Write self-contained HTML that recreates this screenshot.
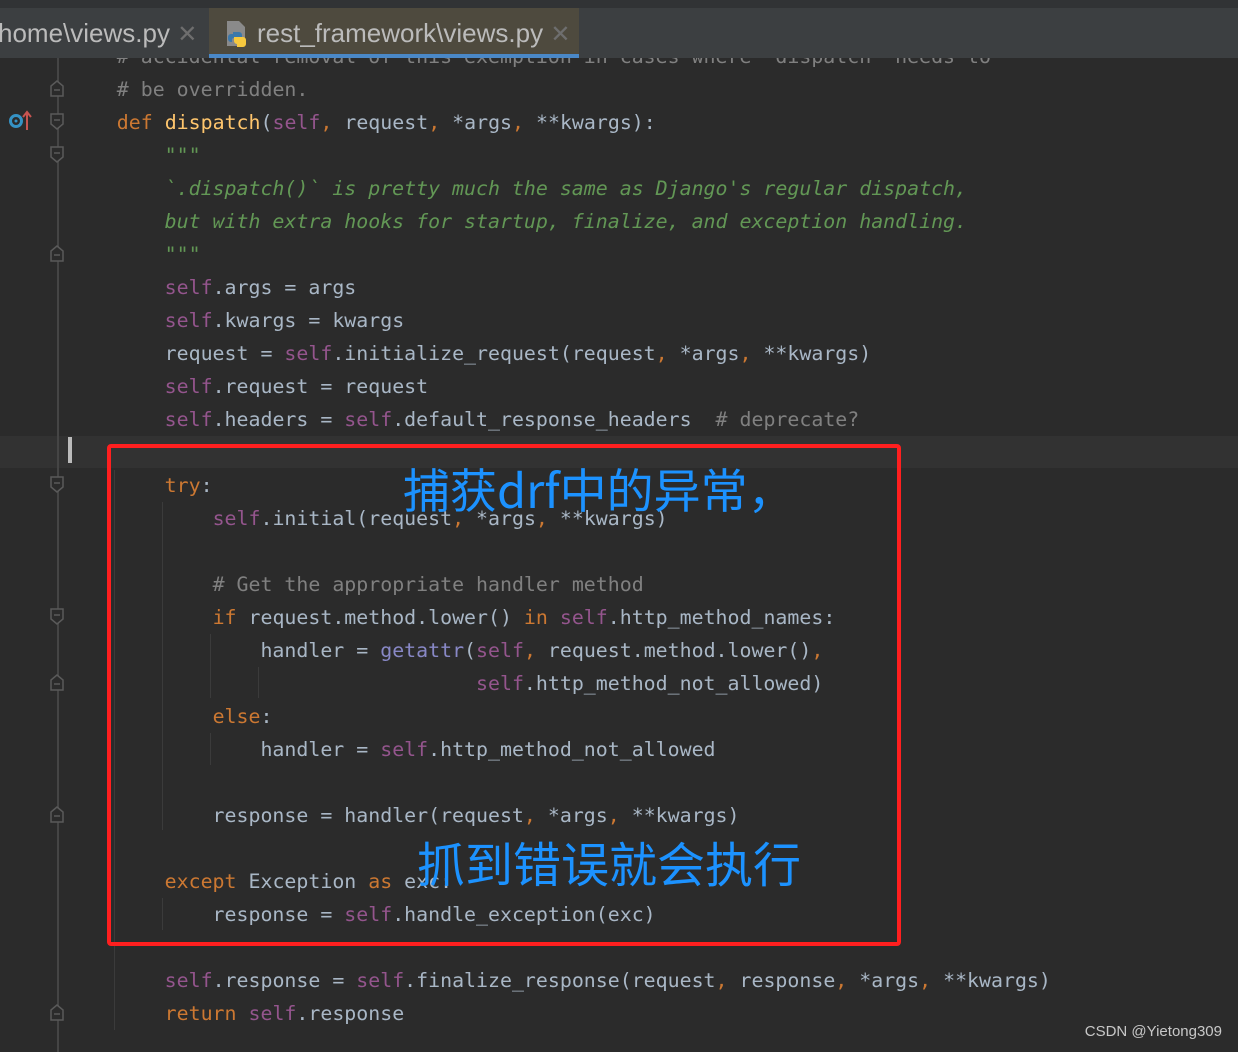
<!DOCTYPE html>
<html><head><meta charset="utf-8"><style>
html,body{margin:0;padding:0;}
body{width:1238px;height:1052px;background:#2b2b2b;position:relative;overflow:hidden;font-family:"DejaVu Sans Mono","Liberation Mono",monospace;}
.tabs{position:absolute;left:0;top:0;width:1238px;height:58px;background:#3c3f41;border-top:8px solid #313335;box-sizing:border-box;}
.tab{position:absolute;top:0;height:50px;font-family:"Liberation Sans",sans-serif;font-size:26px;color:#bbbbbb;line-height:50px;white-space:nowrap;}
.t1{left:-2px;}
.t2{left:209px;width:370px;background:#4e4a3e;border-bottom:4px solid #4a88c7;box-sizing:border-box;height:50px;}
.x{color:#6e6e6e;font-size:24px;}
.code{position:absolute;left:-3px;top:40px;width:1250px;}
.ln{height:33px;line-height:33px;font-size:19.9px;color:#a9b7c6;white-space:pre;position:relative;}
.k{color:#cc7832}.s{color:#94558d}.c{color:#808080}.d{color:#629755;font-style:italic}.f{color:#ffc66d}.b{color:#8888c6}
.cur{position:absolute;left:0;top:436px;width:1238px;height:32px;background:#323232;}
.gl{position:absolute;left:57px;top:58px;width:2px;height:994px;background:#454545;}
.ig{position:absolute;width:1px;background:#3b3b3b;}
.fold{position:absolute;left:50px;width:14px;height:17px;}
.red{position:absolute;left:107px;top:444px;width:794px;height:502px;border:4px solid #ff1f1f;border-radius:4px;box-sizing:border-box;}
.cn{position:absolute;font-family:"Noto Sans CJK SC","WenQuanYi Zen Hei",sans-serif;font-size:47px;color:#1c92ff;line-height:1;white-space:nowrap;}
.wm{position:absolute;right:16px;top:1023px;font-family:"Liberation Sans",sans-serif;font-size:15px;color:#c8c8c8;}
</style></head><body>
<div class="cur"></div>
<div class="gl"></div>
<div class="ig" style="left:114px;top:470px;height:560px"></div>
<div class="ig" style="left:162px;top:502px;height:328px"></div>
<div class="ig" style="left:162px;top:898px;height:32px"></div>
<div class="ig" style="left:210px;top:634px;height:64px"></div>
<div class="ig" style="left:258px;top:667px;height:31px"></div>
<div class="ig" style="left:210px;top:733px;height:32px"></div>
<div style="position:absolute;left:68px;top:437px;width:4px;height:26px;background:#bbbbbb"></div>

<svg class="fold" style="top:80px" viewBox="0 0 14 17"><path d="M1 16V6L7 1L13 6V16Z" fill="#2b2b2b" stroke="#5a5a5a" stroke-width="1.5"/><path d="M4 10H10" stroke="#5a5a5a" stroke-width="1.5"/></svg>
<svg class="fold" style="top:113px" viewBox="0 0 14 17"><path d="M1 1V11L7 16L13 11V1Z" fill="#2b2b2b" stroke="#5a5a5a" stroke-width="1.5"/><path d="M4 7H10" stroke="#5a5a5a" stroke-width="1.5"/></svg>
<svg class="fold" style="top:146px" viewBox="0 0 14 17"><path d="M1 1V11L7 16L13 11V1Z" fill="#2b2b2b" stroke="#5a5a5a" stroke-width="1.5"/><path d="M4 7H10" stroke="#5a5a5a" stroke-width="1.5"/></svg>
<svg class="fold" style="top:245px" viewBox="0 0 14 17"><path d="M1 16V6L7 1L13 6V16Z" fill="#2b2b2b" stroke="#5a5a5a" stroke-width="1.5"/><path d="M4 10H10" stroke="#5a5a5a" stroke-width="1.5"/></svg>
<svg class="fold" style="top:476px" viewBox="0 0 14 17"><path d="M1 1V11L7 16L13 11V1Z" fill="#2b2b2b" stroke="#5a5a5a" stroke-width="1.5"/><path d="M4 7H10" stroke="#5a5a5a" stroke-width="1.5"/></svg>
<svg class="fold" style="top:608px" viewBox="0 0 14 17"><path d="M1 1V11L7 16L13 11V1Z" fill="#2b2b2b" stroke="#5a5a5a" stroke-width="1.5"/><path d="M4 7H10" stroke="#5a5a5a" stroke-width="1.5"/></svg>
<svg class="fold" style="top:674px" viewBox="0 0 14 17"><path d="M1 16V6L7 1L13 6V16Z" fill="#2b2b2b" stroke="#5a5a5a" stroke-width="1.5"/><path d="M4 10H10" stroke="#5a5a5a" stroke-width="1.5"/></svg>
<svg class="fold" style="top:806px" viewBox="0 0 14 17"><path d="M1 16V6L7 1L13 6V16Z" fill="#2b2b2b" stroke="#5a5a5a" stroke-width="1.5"/><path d="M4 10H10" stroke="#5a5a5a" stroke-width="1.5"/></svg>
<svg class="fold" style="top:1004px" viewBox="0 0 14 17"><path d="M1 16V6L7 1L13 6V16Z" fill="#2b2b2b" stroke="#5a5a5a" stroke-width="1.5"/><path d="M4 10H10" stroke="#5a5a5a" stroke-width="1.5"/></svg>
<svg style="position:absolute;left:9px;top:110px" width="24" height="22" viewBox="0 0 24 22"><circle cx="7" cy="11" r="5.5" fill="none" stroke="#3592c4" stroke-width="3"/><circle cx="7" cy="11" r="1.5" fill="#3592c4"/><path d="M18 20V3M14 7L18 2L22 7" stroke="#c75450" stroke-width="2" fill="none"/></svg>

<div class="code">
<div class="ln">          <span class="c"># accidental removal of this exemption in cases where `dispatch` needs to</span></div>
<div class="ln">          <span class="c"># be overridden.</span></div>
<div class="ln">          <span class="k">def</span> <span class="f">dispatch</span>(<span class="s">self</span><span class="k">,</span> request<span class="k">,</span> *args<span class="k">,</span> **kwargs):</div>
<div class="ln">              <span class="d">"""</span></div>
<div class="ln">              <span class="d">`.dispatch()` is pretty much the same as Django's regular dispatch,</span></div>
<div class="ln">              <span class="d">but with extra hooks for startup, finalize, and exception handling.</span></div>
<div class="ln">              <span class="d">"""</span></div>
<div class="ln">              <span class="s">self</span>.args = args</div>
<div class="ln">              <span class="s">self</span>.kwargs = kwargs</div>
<div class="ln">              request = <span class="s">self</span>.initialize_request(request<span class="k">,</span> *args<span class="k">,</span> **kwargs)</div>
<div class="ln">              <span class="s">self</span>.request = request</div>
<div class="ln">              <span class="s">self</span>.headers = <span class="s">self</span>.default_response_headers  <span class="c"># deprecate?</span></div>
<div class="ln"> </div>
<div class="ln">              <span class="k">try</span>:</div>
<div class="ln">                  <span class="s">self</span>.initial(request<span class="k">,</span> *args<span class="k">,</span> **kwargs)</div>
<div class="ln"> </div>
<div class="ln">                  <span class="c"># Get the appropriate handler method</span></div>
<div class="ln">                  <span class="k">if</span> request.method.lower() <span class="k">in</span> <span class="s">self</span>.http_method_names:</div>
<div class="ln">                      handler = <span class="b">getattr</span>(<span class="s">self</span><span class="k">,</span> request.method.lower()<span class="k">,</span></div>
<div class="ln">                                        <span class="s">self</span>.http_method_not_allowed)</div>
<div class="ln">                  <span class="k">else</span>:</div>
<div class="ln">                      handler = <span class="s">self</span>.http_method_not_allowed</div>
<div class="ln"> </div>
<div class="ln">                  response = handler(request<span class="k">,</span> *args<span class="k">,</span> **kwargs)</div>
<div class="ln"> </div>
<div class="ln">              <span class="k">except</span> Exception <span class="k">as</span> exc:</div>
<div class="ln">                  response = <span class="s">self</span>.handle_exception(exc)</div>
<div class="ln"> </div>
<div class="ln">              <span class="s">self</span>.response = <span class="s">self</span>.finalize_response(request<span class="k">,</span> response<span class="k">,</span> *args<span class="k">,</span> **kwargs)</div>
<div class="ln">              <span class="k">return</span> <span class="s">self</span>.response</div>
</div>

<div class="tabs">
<div class="tab t1">home\views.py <span class="x">✕</span></div>
<div class="tab t2"><svg style="position:absolute;left:16px;top:12px" width="26" height="28" viewBox="0 0 26 28"><path d="M2 1H14L20 7V26H2Z" fill="#8a8a8a"/><path d="M8 12h6a3 3 0 0 1 3 3v3H9a2 2 0 0 0-2 2v2H6a3 3 0 0 1-3-3v-2a3 3 0 0 1 3-3h2z" fill="#3c78aa"/><path d="M12 27h6a3 3 0 0 0 3-3v-4a3 3 0 0 0-3-3h-9v4a3 3 0 0 0 3 3z" fill="#f7c93e"/></svg><span style="position:absolute;left:48px">rest_framework\views.py <span class="x">✕</span></span></div>
</div>

<div class="red"></div>
<div class="cn" style="left:403px;top:464px">捕获drf中的异常，</div>
<div class="cn" style="left:417px;top:837px;font-size:48px">抓到错误就会执行</div>
<div class="wm">CSDN @Yietong309</div>
</body></html>
